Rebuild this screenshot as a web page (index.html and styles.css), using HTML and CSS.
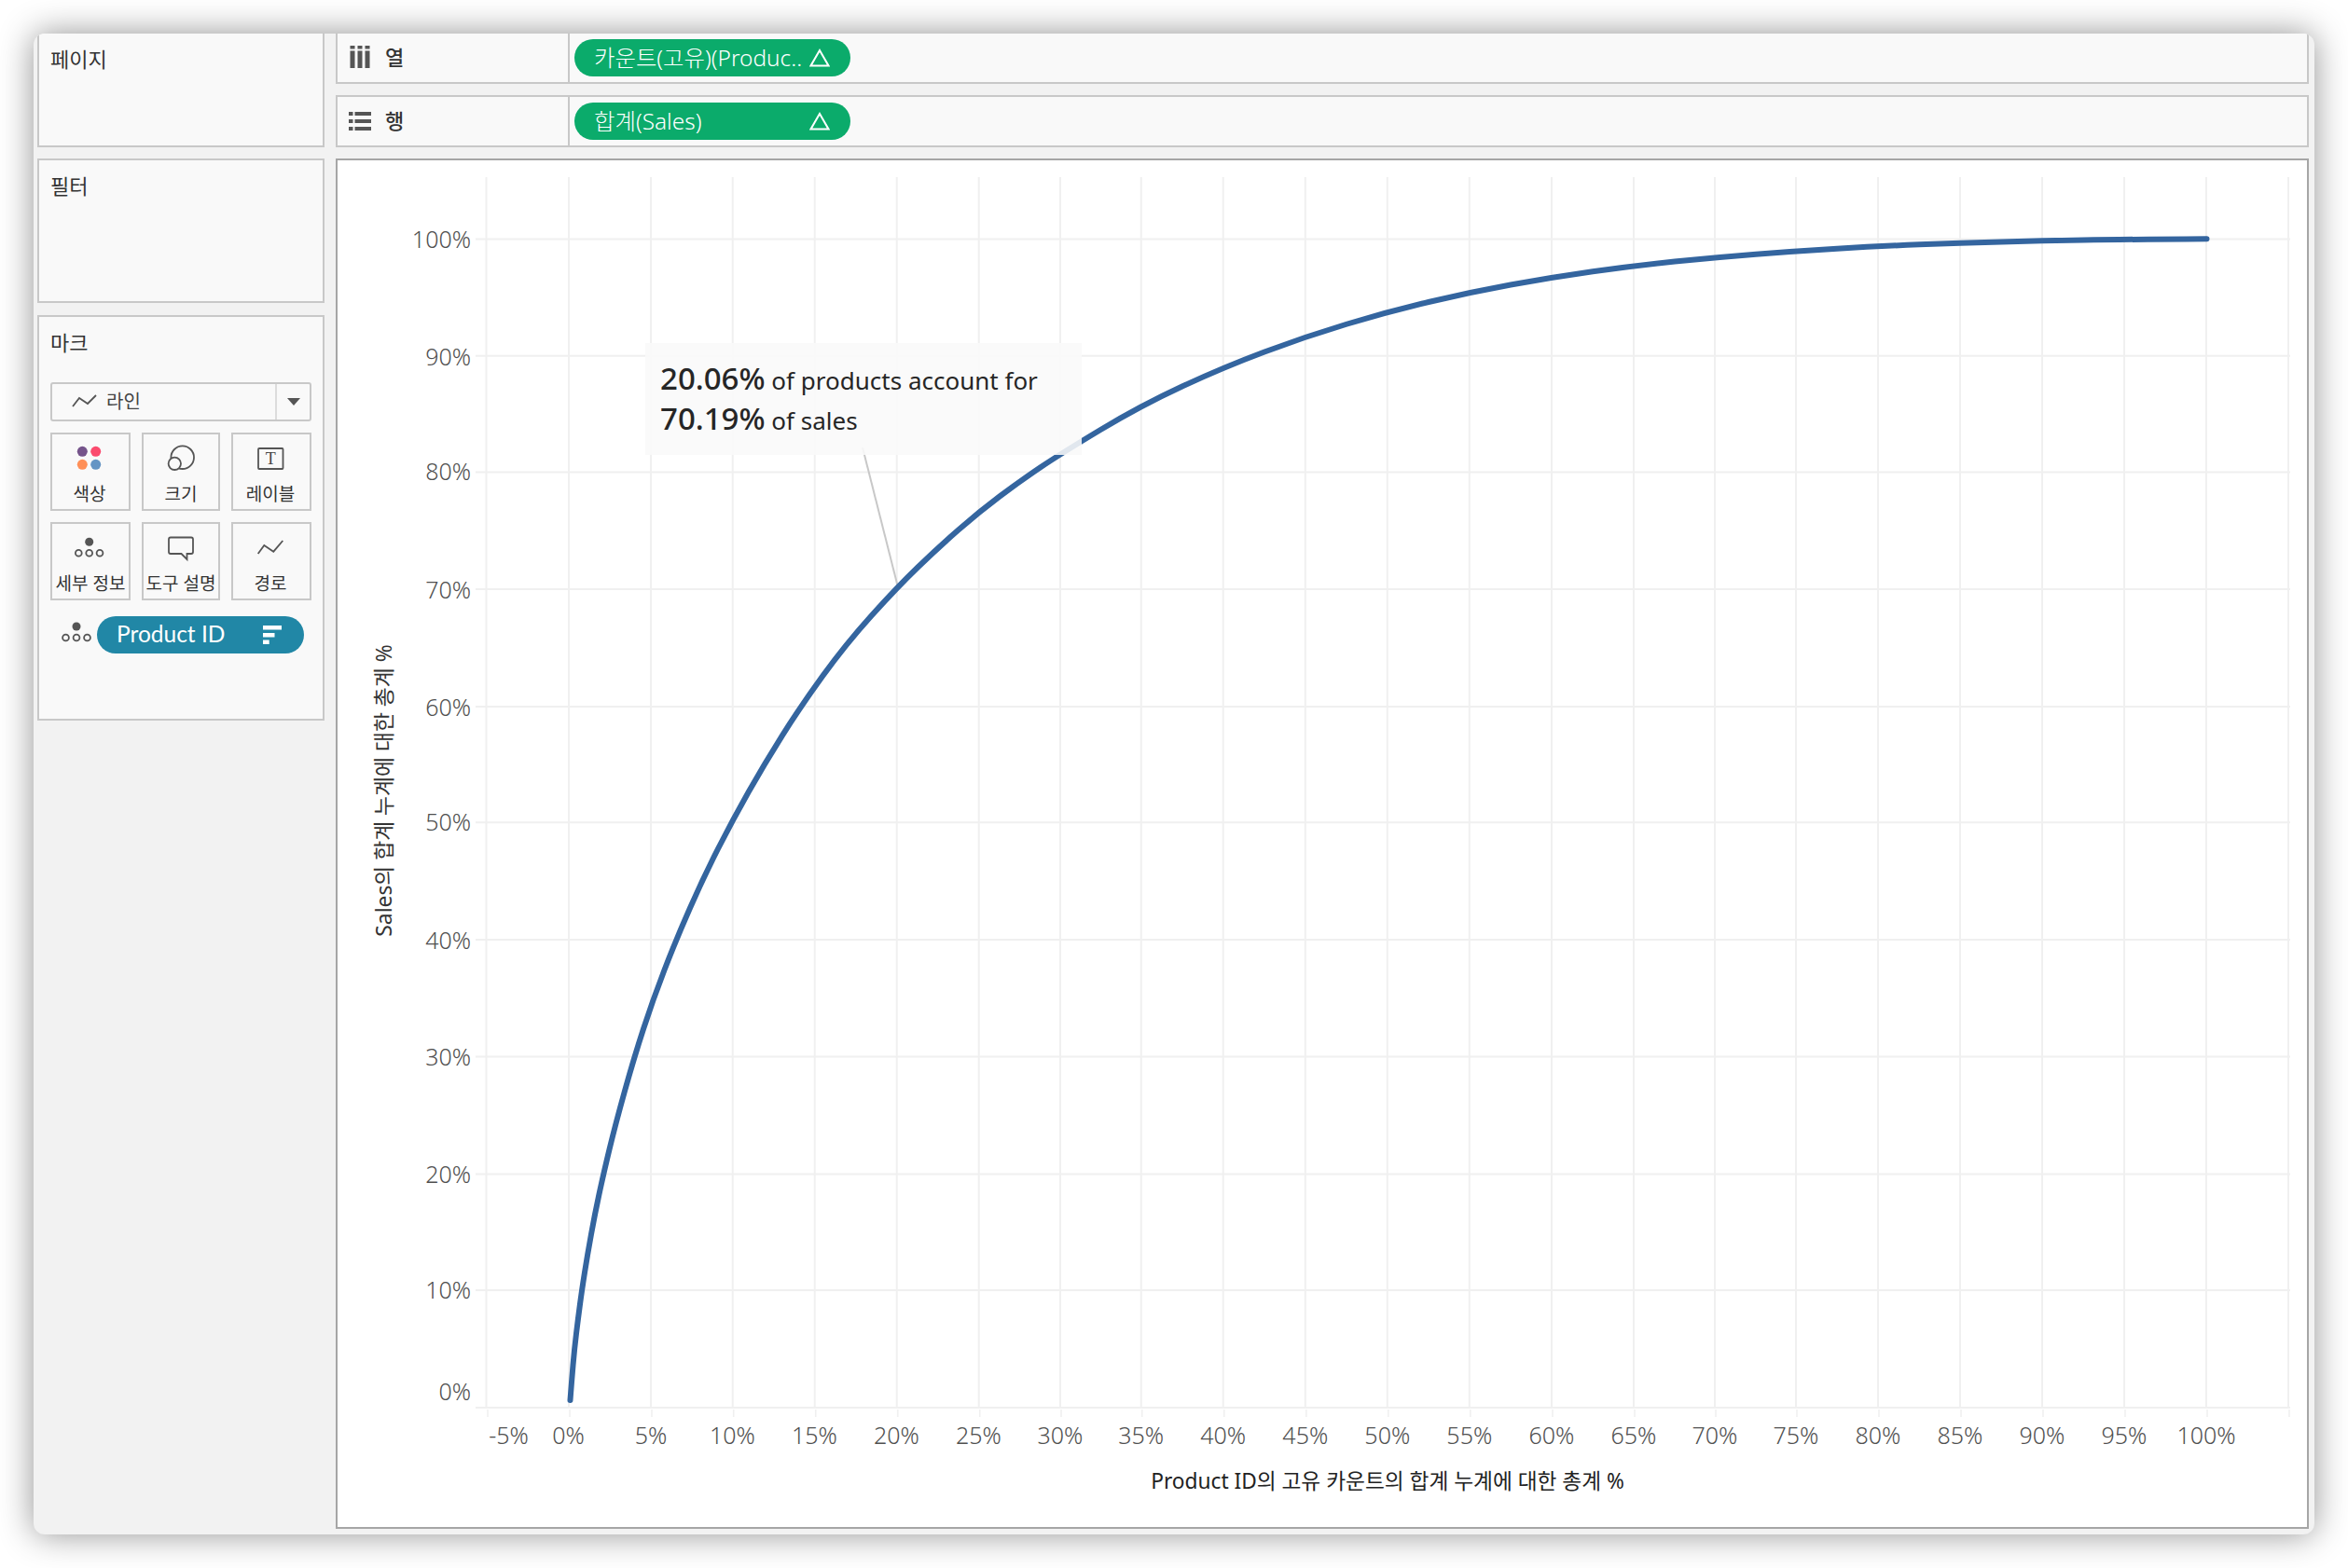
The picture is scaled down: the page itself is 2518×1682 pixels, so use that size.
FILE: index.html
```html
<!DOCTYPE html>
<html lang="ko">
<head>
<meta charset="utf-8">
<title>Pareto</title>
<link rel="stylesheet" href="styles.css">
</head>
<body>
<div class="window">
  <aside class="side">
    <section class="panel panel-page"><h2 class="panel-title">페이지</h2></section>
    <section class="panel panel-filter"><h2 class="panel-title">필터</h2></section>
    <section class="panel panel-marks">
      <h2 class="panel-title">마크</h2>
      <div class="dropdown">
        <div class="dropdown-main">
          <svg class="dd-icon" viewBox="0 0 24 12"><path class="ic-line" d="M0 12 7 3 16 9 25 0"/></svg>
          <span class="dd-text">라인</span>
        </div>
        <div class="dropdown-btn"><span class="caret"></span></div>
      </div>
      <div class="mark-grid">
        <div class="mark-card">
          <svg class="mark-icon" viewBox="0 0 60 40">
            <circle class="dot-purple" cx="21.300" cy="13.300" r="5.500"/>
            <circle class="dot-red" cx="35.700" cy="13.300" r="5.500"/>
            <circle class="dot-orange" cx="21.300" cy="27.300" r="5.500"/>
            <circle class="dot-blue" cx="35.700" cy="27.300" r="5.500"/>
          </svg>
          <span class="mark-label mark-label-shift">색상</span>
        </div>
        <div class="mark-card">
          <svg class="mark-icon" viewBox="0 0 60 40">
            <circle class="ic-line" cx="31.700" cy="19.700" r="12.300"/>
            <circle class="ic-line ic-bgfill" cx="23.300" cy="26.300" r="6.700"/>
          </svg>
          <span class="mark-label">크기</span>
        </div>
        <div class="mark-card">
          <svg class="mark-icon" viewBox="0 0 60 40">
            <rect class="ic-line" x="16" y="10" width="26.500" height="22" rx="1"/>
            <text class="ic-t" x="29.200" y="27">T</text>
          </svg>
          <span class="mark-label mark-label-shift">레이블</span>
        </div>
        <div class="mark-card">
          <svg class="mark-icon" viewBox="0 0 60 40">
            <circle class="ic-fill" cx="28.700" cy="14.300" r="4.500"/>
            <circle class="ic-line" cx="17.300" cy="26.300" r="3.400"/>
            <circle class="ic-line" cx="28.700" cy="26.300" r="3.400"/>
            <circle class="ic-line" cx="40" cy="26.300" r="3.400"/>
          </svg>
          <span class="mark-label">세부 정보</span>
        </div>
        <div class="mark-card">
          <svg class="mark-icon" viewBox="0 0 60 40">
            <path class="ic-line" d="M19 9.500h22a2 2 0 0 1 2 2v13.500a2 2 0 0 1-2 2h-4.500v6l-6-6H19a2 2 0 0 1-2-2V11.500a2 2 0 0 1 2-2z"/>
          </svg>
          <span class="mark-label">도구 설명</span>
        </div>
        <div class="mark-card">
          <svg class="mark-icon" viewBox="0 0 60 40">
            <path class="ic-line" d="M15.700 27 22.300 18 32.300 24.700 42.300 13"/>
          </svg>
          <span class="mark-label mark-label-shift">경로</span>
        </div>
      </div>
      <div class="field-row">
        <svg class="field-icon" viewBox="0 0 34 30">
          <circle class="ic-fill" cx="17" cy="6" r="4.500"/>
          <circle class="ic-line" cx="5.500" cy="18" r="3.400"/>
          <circle class="ic-line" cx="17" cy="18" r="3.400"/>
          <circle class="ic-line" cx="28.500" cy="18" r="3.400"/>
        </svg>
        <div class="pill pill-blue">
          <span class="pill-text">Product ID</span>
          <svg class="sort-icon" viewBox="0 0 20 20">
            <rect class="ic-white" x="0" y="0" width="20" height="4.500"/>
            <rect class="ic-white" x="0" y="8" width="12.500" height="4.500"/>
            <rect class="ic-white" x="0" y="15.500" width="6.700" height="4.500"/>
          </svg>
        </div>
      </div>
    </section>
  </aside>

  <main class="main">
    <div class="shelf shelf-cols">
      <div class="shelf-label">
        <svg class="shelf-icon" viewBox="0 0 24 24">
          <rect class="ic-bar" x="1.500" y="0" width="5" height="3.500"/><rect class="ic-bar" x="1.500" y="5.500" width="5" height="18.500"/>
          <rect class="ic-bar" x="9.500" y="0" width="5" height="3.500"/><rect class="ic-bar" x="9.500" y="5.500" width="5" height="18.500"/>
          <rect class="ic-bar" x="17.500" y="0" width="5" height="3.500"/><rect class="ic-bar" x="17.500" y="5.500" width="5" height="18.500"/>
        </svg>
        <span class="shelf-text">열</span>
      </div>
      <div class="shelf-body">
        <div class="pill pill-green">
          <span class="pill-text">카운트(고유)(Produc..</span>
          <svg class="delta" viewBox="0 0 22 20"><path class="ic-delta" d="M11 2 20.500 18.500H1.500Z"/></svg>
        </div>
      </div>
    </div>
    <div class="shelf shelf-rows">
      <div class="shelf-label">
        <svg class="shelf-icon" viewBox="0 0 24 24">
          <rect class="ic-bar" x="0" y="3" width="4.500" height="4"/><rect class="ic-bar" x="6.500" y="3" width="17.500" height="4"/>
          <rect class="ic-bar" x="0" y="11" width="4.500" height="4"/><rect class="ic-bar" x="6.500" y="11" width="17.500" height="4"/>
          <rect class="ic-bar" x="0" y="19" width="4.500" height="4"/><rect class="ic-bar" x="6.500" y="19" width="17.500" height="4"/>
        </svg>
        <span class="shelf-text">행</span>
      </div>
      <div class="shelf-body">
        <div class="pill pill-green">
          <span class="pill-text">합계(Sales)</span>
          <svg class="delta" viewBox="0 0 22 20"><path class="ic-delta" d="M11 2 20.500 18.500H1.500Z"/></svg>
        </div>
      </div>
    </div>

    <div class="chart">
      <svg class="plot" viewBox="362 172 2112 1466">
        <path class="grid" d="M521.500 190V1510M610 190V1510M698 190V1510M785.700 190V1510M873.700 190V1510M961.700 190V1510M1049.700 190V1510M1137 190V1510M1223.700 190V1510M1311.700 190V1510M1399.800 190V1510M1487.800 190V1510M1575.800 190V1510M1664 190V1510M1752 190V1510M1839 190V1510M1926 190V1510M2014 190V1510M2102 190V1510M2190 190V1510M2278 190V1510M2366 190V1510M2454 190V1510"/>
        <path class="grid" d="M510 256.400H2456M510 381.700H2456M510 506.600H2456M510 632H2456M510 758H2456M510 882.300H2456M510 1008H2456M510 1133.600H2456M510 1259.600H2456M510 1384H2456M510 1510H2456"/>
        <path class="tick" d="M523 1512V1520M611 1512V1520M699 1512V1520M786.700 1512V1520M874.700 1512V1520M962.700 1512V1520M1050.700 1512V1520M1138 1512V1520M1224.700 1512V1520M1312.700 1512V1520M1400.800 1512V1520M1488.800 1512V1520M1576.800 1512V1520M1665 1512V1520M1753 1512V1520M1840 1512V1520M1927 1512V1520M2015 1512V1520M2103 1512V1520M2191 1512V1520M2279 1512V1520M2367 1512V1520M2455 1512V1520"/>

        <path class="leader" d="M925 480 962.500 628"/>
        <path class="curve" d="M611.500 1502Q613 1482 614.500 1464.500Q616 1447 618 1430.500Q620 1414 622 1399Q624 1384 627 1365Q630 1346 634 1324Q638 1302 642.500 1281Q647 1260 653.500 1233Q660 1206 670 1170.200Q680 1134.400 690 1103.700Q700 1073 712.500 1040.500Q725 1008 740 974Q755 940 770.250 910Q785.500 880 802.750 849.500Q820 819 839 788.800Q858 758.600 882.500 724.800Q907 691 934.500 660.500Q962 630 984 608.750Q1006 587.500 1028 568.250Q1050 549 1072 532.500Q1094 516 1115.500 501.500Q1137 487 1180.250 461Q1223.500 435 1267.750 414.500Q1312 394 1356 377.500Q1400 361 1444 347.750Q1488 334.500 1532 324Q1576 313.500 1620 305.500Q1664 297.500 1708 291.250Q1752 285 1796 280.500Q1840 276 1883 272.650Q1926 269.300 1970 266.650Q2014 264 2058 262.350Q2102 260.700 2146 259.500Q2190 258.300 2234 257.550Q2278 256.800 2366.500 256.300"/>

        <g class="y-labels">
          <text x="505" y="266">100%</text>
          <text x="505" y="392">90%</text>
          <text x="505" y="515">80%</text>
          <text x="505" y="642">70%</text>
          <text x="505" y="767.500">60%</text>
          <text x="505" y="891">50%</text>
          <text x="505" y="1017.500">40%</text>
          <text x="505" y="1143">30%</text>
          <text x="505" y="1269">20%</text>
          <text x="505" y="1393">10%</text>
          <text x="505" y="1501.500">0%</text>
        </g>
        <g class="x-labels">
          <text x="545.500" y="1549">-5%</text>
          <text x="609.500" y="1549">0%</text>
          <text x="698" y="1549">5%</text>
          <text x="785.500" y="1549">10%</text>
          <text x="873.500" y="1549">15%</text>
          <text x="961.500" y="1549">20%</text>
          <text x="1049.500" y="1549">25%</text>
          <text x="1137" y="1549">30%</text>
          <text x="1223.700" y="1549">35%</text>
          <text x="1311.700" y="1549">40%</text>
          <text x="1399.800" y="1549">45%</text>
          <text x="1487.800" y="1549">50%</text>
          <text x="1575.800" y="1549">55%</text>
          <text x="1664" y="1549">60%</text>
          <text x="1752" y="1549">65%</text>
          <text x="1839" y="1549">70%</text>
          <text x="1926" y="1549">75%</text>
          <text x="2014" y="1549">80%</text>
          <text x="2102" y="1549">85%</text>
          <text x="2190" y="1549">90%</text>
          <text x="2278" y="1549">95%</text>
          <text x="2366" y="1549">100%</text>
        </g>
        <text class="axis-title axis-x" x="1488" y="1597">Product ID의 고유 카운트의 합계 누계에 대한 총계 %</text>
        <text class="axis-title axis-y" transform="translate(420 848) rotate(-90)">Sales의 합계 누계에 대한 총계 %</text>
      </svg>
      <div class="note">
        <p class="note-line"><span class="note-num">20.06%</span> of products account for</p>
        <p class="note-line"><span class="note-num">70.19%</span> of sales</p>
      </div>
    </div>
  </main>
</div>
</body>
</html>
```

FILE: styles.css
```css
* { box-sizing: border-box; }
html { background: #fff; }
body {
  margin: 0;
  width: 2518px;
  height: 1682px;
  padding: 36px;
  overflow: hidden;
  background: #fff;
  font-family: "Noto Sans", "Noto Sans CJK KR", sans-serif;
  color: #333;
}
.window {
  width: 2446px;
  height: 1610px;
  padding: 0 6px 6px 4px;
  display: grid;
  grid-template-columns: 308px 1fr;
  column-gap: 12px;
  background: #f2f2f2;
  border-radius: 12px;
  box-shadow: 0 0 36px rgba(0, 0, 0, 0.43);
  overflow: hidden;
}
.side { display: flex; flex-direction: column; }
.panel {
  background: #f9f9f9;
  border: 2px solid #c8c8c8;
  padding: 0 12px;
}
.panel-page { height: 122px; border-top: 0; padding-top: 13px; margin-bottom: 12px; }
.panel-filter { height: 155px; padding-top: 12.500px; margin-bottom: 13px; }
.panel-marks { height: 435px; padding-top: 13px; }
.panel-title {
  margin: 0;
  font-size: 22px;
  font-weight: 400;
  line-height: 28px;
  color: #333;
}
.dropdown {
  margin-top: 29px;
  height: 42px;
  border: 2px solid #c8c8c8;
  border-radius: 3px;
  display: flex;
  font-size: 20px;
  color: #444;
}
.dropdown-main {
  flex: 1;
  display: flex;
  align-items: center;
  padding-left: 22px;
  gap: 12px;
  border-right: 2px solid #dcdcdc;
}
.dd-text { margin-top: -3px; }
.dd-icon { width: 24px; height: 12px; overflow: visible; margin-top: -3px; }
.dropdown-btn { width: 35px; display: flex; align-items: center; justify-content: center; }
.caret {
  width: 0; height: 0;
  border-left: 7px solid transparent;
  border-right: 7px solid transparent;
  border-top: 8px solid #555;
}
.mark-grid {
  margin-top: 12px;
  display: grid;
  grid-template-columns: 86px 84px 86px;
  grid-auto-rows: 84px;
  gap: 12px;
}
.mark-card {
  border: 2px solid #c8c8c8;
  display: flex;
  flex-direction: column;
  align-items: center;
  padding-top: 5px;
  white-space: nowrap;
}
.mark-icon { width: 60px; height: 40px; }
.mark-label { margin-top: 7px; font-size: 19px; line-height: 24px; color: #333; }
.mark-label-shift { margin-right: 2px; }
.field-row {
  margin-top: 17px;
  display: flex;
  align-items: center;
  padding-left: 11px;
  gap: 5px;
}
.field-icon { width: 34px; height: 30px; }
.pill {
  display: flex;
  align-items: center;
  justify-content: space-between;
  height: 40px;
  border-radius: 20px;
  color: #fff;
  white-space: nowrap;
}
.pill-blue {
  width: 222px;
  padding: 0 24px 0 21px;
  background: #2187a6;
  font-family: "Lato", "Noto Sans CJK KR", sans-serif;
  font-size: 24.500px;
}
.pill-text { margin-top: -3px; }
.pill-blue .pill-text { font-weight: 400; }
.pill-green .pill-text { font-weight: 300; }
.sort-icon { width: 20px; height: 20px; }
.ic-white { fill: #fff; }
.ic-line { fill: none; stroke: #555; stroke-width: 1.8; }
.ic-bgfill { fill: #f9f9f9; }
.ic-fill { fill: #555; }
.ic-bar { fill: #555; }
.ic-t { font-family: "Liberation Serif", serif; font-size: 18px; fill: #444; text-anchor: middle; }
.dot-purple { fill: #75548b; }
.dot-red { fill: #fb4b6e; }
.dot-orange { fill: #ff9058; }
.dot-blue { fill: #6595c4; }

.main { display: flex; flex-direction: column; }
.shelf {
  display: flex;
  background: #f9f9f9;
  border: 2px solid #c8c8c8;
}
.shelf-cols { height: 54px; border-top: 0; margin-bottom: 12px; }
.shelf-rows { height: 56px; margin-bottom: 12px; }
.shelf-label {
  width: 249px;
  border-right: 2px solid #c8c8c8;
  display: flex;
  align-items: center;
  padding-left: 12px;
  gap: 15px;
  font-size: 22px;
  font-weight: 500;
  color: #333;
}
.shelf-icon { width: 24px; height: 24px; margin-top: -2px; }
.shelf-text { margin-top: -4px; }
.shelf-body { flex: 1; display: flex; align-items: center; padding-left: 5px; }
.pill-green {
  width: 296px;
  padding: 0 22px 0 21px;
  background: #0bab6b;
  font-size: 24.400px;
}
.delta { width: 22px; height: 20px; }
.ic-delta { fill: none; stroke: #fff; stroke-width: 2; }

.chart {
  flex: 1;
  position: relative;
  background: #fff;
  border: 2px solid #a6a6a6;
}
.plot { display: block; width: 2112px; height: 1466px; }
.grid { fill: none; stroke: #f0f0f0; stroke-width: 2; }
.tick { fill: none; stroke: #f0f0f0; stroke-width: 1.6; }
.leader { fill: none; stroke: #c8c8c8; stroke-width: 2; }
.curve { fill: none; stroke: #34659f; stroke-width: 6; stroke-linecap: round; stroke-linejoin: round; }
.y-labels text { font-size: 25px; font-weight: 300; fill: #505050; text-anchor: end; }
.x-labels text { font-size: 25px; font-weight: 300; fill: #505050; text-anchor: middle; }
.axis-title { fill: #333; text-anchor: middle; }
.axis-x { font-size: 22.700px; fill: #222; }
.axis-y { font-size: 22.800px; }
.note {
  position: absolute;
  left: 330px;
  top: 196px;
  width: 468px;
  height: 120px;
  padding: 18.500px 0 0 16px;
  background: rgba(249, 249, 249, .88);
}
.note-line {
  margin: 0;
  font-size: 26px;
  line-height: 43.500px;
  color: #262626;
  white-space: nowrap;
}
.note-num { font-size: 33px; font-weight: 500; line-height: 1; }
```
